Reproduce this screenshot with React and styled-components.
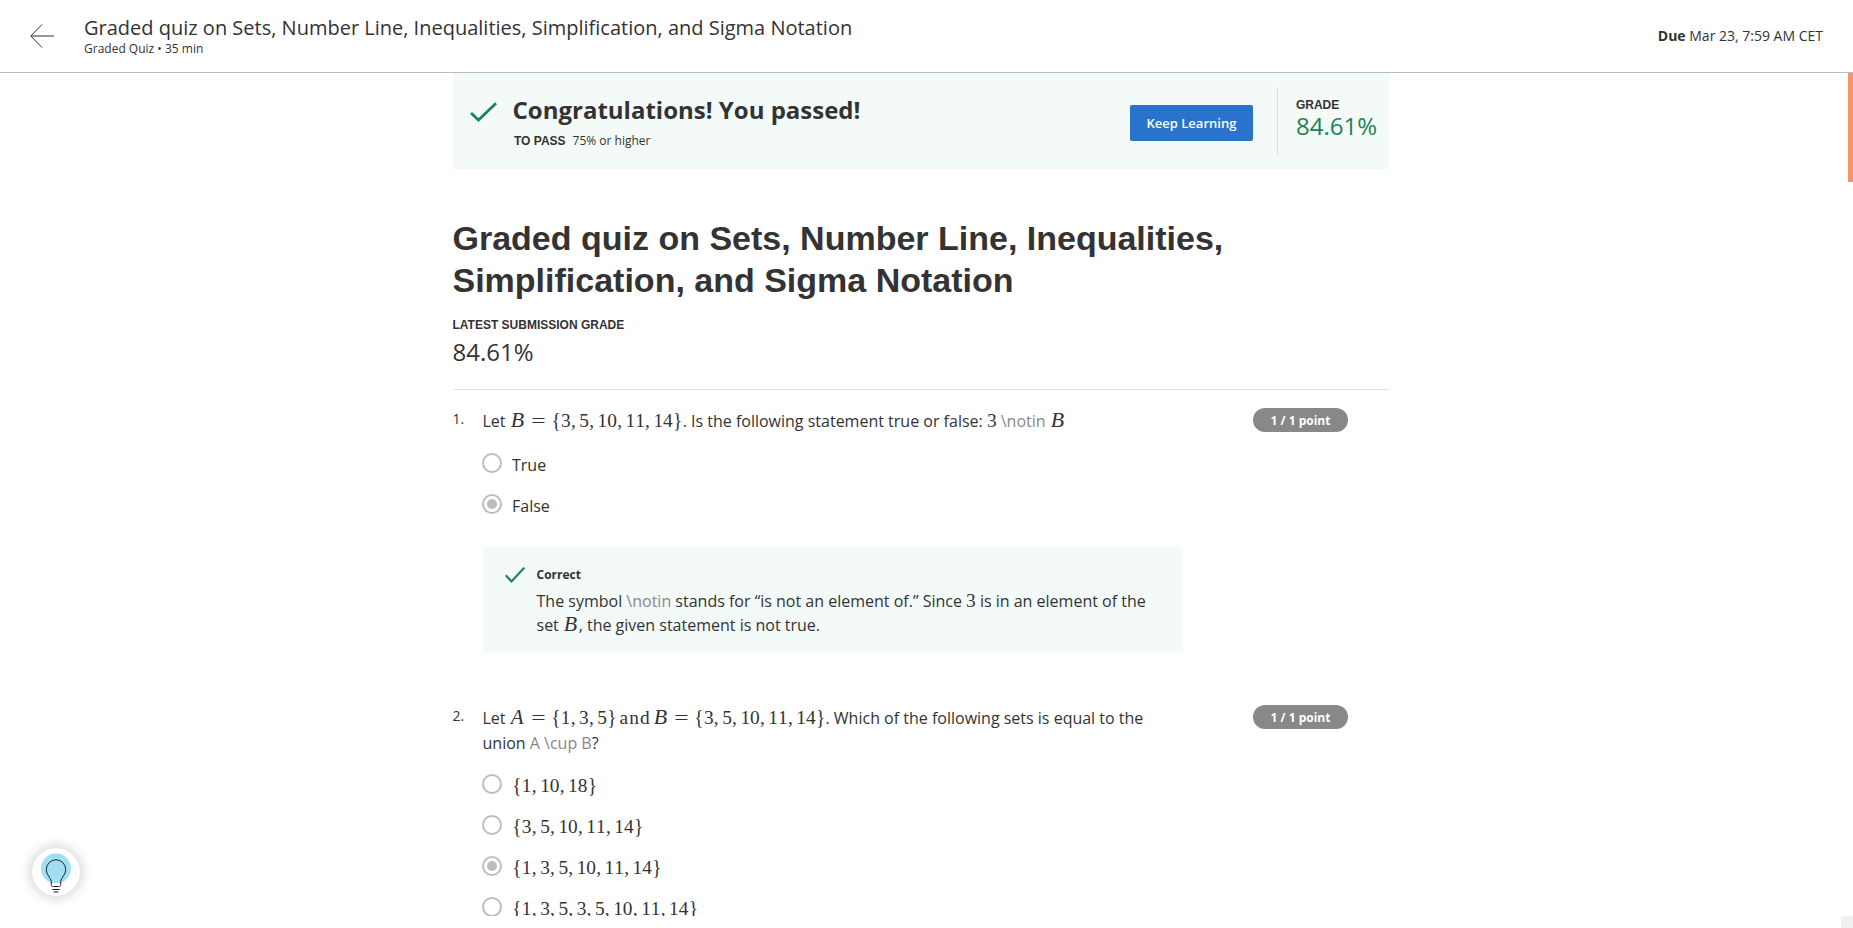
import React from "react";
import styled, { createGlobalStyle, css } from "styled-components";

const GlobalStyle = createGlobalStyle`
  *, *::before, *::after { box-sizing: border-box; }
  html, body { margin: 0; height: 100%; overflow: hidden; background: #fff; }
  body { font-family: "Open Sans", sans-serif; color: #333; }
`;

const Page = styled.div`
  height: 928px;
  width: 1853px;
  display: flex;
  flex-direction: column;
  position: relative;
`;

const Header = styled.header`
  height: 73px;
  flex: none;
  display: flex;
  align-items: center;
  padding: 0 30px;
  border-bottom: 1px solid #bbb;
`;

const HeaderText = styled.div`
  margin-left: 30px;
  flex: 1;
  height: 46px;
`;

const HeaderTitle = styled.div`
  font-size: 20px;
  line-height: 30px;
`;

const HeaderMeta = styled.div`
  font-size: 12px;
  line-height: 12px;
`;

const Due = styled.div`
  font-size: 14px;
  line-height: 20px;
`;

const Viewport = styled.div`
  height: 843px;
  flex: none;
  display: flex;
  overflow: hidden;
`;

const Content = styled.main`
  width: 936px;
  margin-left: 452.5px;
  flex: none;
`;

const ScrollThumb = styled.div`
  width: 5px;
  height: 109px;
  margin-left: auto;
  background: #f5936b;
`;

const Corner = styled.div`
  width: 12px;
  height: 12px;
  margin-left: auto;
  background: #f1f0f0;
`;

const Banner = styled.section`
  height: 96px;
  display: flex;
  align-items: center;
  background: #f3faf8;
`;

const BannerText = styled.div`
  margin-left: 16px;
  flex: 1;
  height: 68px;
  padding-top: 6px;
`;

const BannerTitle = styled.div`
  font-size: 24px;
  font-weight: 700;
  line-height: 34px;
`;

const PassLine = styled.div`
  margin: 5px 0 0 1.5px;
  display: flex;
  gap: 7px;
  font-size: 12px;
  line-height: 18px;
`;

const Caps = styled.div`
  font-family: "Liberation Sans", sans-serif;
  font-size: 12px;
  font-weight: 700;
  line-height: 18px;
`;

const KeepButton = styled.button`
  width: 123px;
  height: 36px;
  margin-top: 4px;
  padding: 0;
  border: 0;
  border-radius: 2px;
  background: #2a73cc;
  color: #fff;
  font: 600 13px/36px "Open Sans", sans-serif;
  white-space: nowrap;
`;

const GradeBox = styled.div`
  height: 68px;
  margin-left: 24px;
  padding: 9px 11.5px 0 18px;
  border-left: 1px solid #ddd;
`;

const Grade = styled.div`
  font-size: 24px;
  line-height: 24px;
  color: ${(p) => (p.$passed ? "#1f8354" : "#333")};
`;

const Summary = styled.section`
  height: 221px;
  padding-top: 48px;
  border-bottom: 1px solid #e1e1e1;
`;

const QuizTitle = styled.h1`
  margin: 0 0 15px;
  font-family: "Liberation Sans", sans-serif;
  font-size: 34px;
  font-weight: 700;
  line-height: 42px;
`;

const LatestGrade = styled.div`
  display: flex;
  flex-direction: column;
  gap: 6px;
`;

const Question = styled.section`
  height: ${(p) => p.$height}px;
  display: flex;
  align-items: flex-start;
  padding-top: 18px;
`;

const Number = styled.div`
  width: 30px;
  padding-top: 1px;
  font-size: 14px;
  line-height: 20px;
`;

const QuestionBody = styled.div`
  width: 701px;
  flex: none;
`;

const Prompt = styled.div`
  padding-top: 1px;
  font-size: 16px;
  line-height: 25px;
  white-space: nowrap;
`;

const Options = styled.div`
  padding-top: ${(p) => p.$top}px;
`;

const Option = styled.div`
  height: 41px;
  display: flex;
  gap: 10px;
  margin-left: -0.5px;
`;

const Radio = styled.div`
  width: 20px;
  height: 20px;
  flex: none;
  display: flex;
  align-items: center;
  justify-content: center;
  border: 2px solid #bdbdbd;
  border-radius: 50%;
  ${(p) =>
    p.$checked &&
    css`
      &::after {
        content: "";
        width: 10px;
        height: 10px;
        border-radius: 50%;
        background: #bdbdbd;
      }
    `}
`;

const OptionLabel = styled.div`
  font-size: 16px;
  line-height: 24px;
`;

const Feedback = styled.div`
  width: 700px;
  height: 105px;
  margin: 12px 0 0 0.5px;
  padding: 20px 0 0 22px;
  display: flex;
  gap: 11.5px;
  background: #f3faf8;
`;

const FeedbackTitle = styled.div`
  font-size: 12px;
  font-weight: 700;
  line-height: 16px;
`;

const FeedbackText = styled.div`
  margin-top: 6px;
  font-size: 16px;
  line-height: 24px;
  white-space: nowrap;
`;

const Points = styled.div`
  width: 95px;
  height: 24px;
  margin: 0 0 0 69.5px;
  border-radius: 12px;
  background: #888;
  color: #fff;
  font-size: 12px;
  font-weight: 700;
  line-height: 25px;
  text-align: center;
`;

const Raw = styled.span`
  color: #888;
`;

const Formula = styled.span`
  display: inline-flex;
  align-items: baseline;
  font-family: "Liberation Serif", serif;
  font-size: 19.36px;
  line-height: 20px;
  height: 20px;
  vertical-align: baseline;
`;

const Glyph = styled.span`
  display: inline-block;
  width: ${(p) => p.$width}em;
  margin: 0 ${(p) => p.$after || 0}em 0 ${(p) => p.$before || 0}em;
  text-align: center;
  font-style: ${(p) => (p.$italic ? "italic" : "normal")};
  transform: scale(${(p) => p.$stretch || 1}, ${(p) => p.$rise || 1});
  transform-origin: 50% 78%;
`;

const Upright = styled.span`
  letter-spacing: 0.056em;
  margin: 0 0.09em 0 0.14em;
`;

const HelpButton = styled.button`
  position: absolute;
  left: 32px;
  top: 848px;
  width: 48px;
  height: 48px;
  padding: 0;
  border: 0;
  border-radius: 50%;
  background: #fff;
  box-shadow: 0 0 14px rgba(0, 0, 0, 0.24);
`;

function glyphProps(ch) {
  if (ch === "=") return { $width: 0.778, $before: 0.278, $after: 0.278, $stretch: 1.32 };
  if (ch === ",") return { $width: 0.278, $after: 0.1667 };
  if (ch === "A") return { $width: 0.75, $after: 0.05, $italic: true, $stretch: 1.08, $rise: 1.07 };
  if (ch === "B") return { $width: 0.77, $after: 0.04, $italic: true, $stretch: 1.13, $rise: 1.05 };
  if (ch === "{" || ch === "}") return { $width: 0.51, $rise: 1.08 };
  return { $width: 0.5, $rise: 1.02 };
}

function Tex({ children }) {
  return (
    <Formula>
      {children.split(/(and)/).map((part, i) =>
        part === "and" ? (
          <Upright key={i}>and</Upright>
        ) : (
          [...part].map((ch, j) => (
            <Glyph key={`${i}-${j}`} {...glyphProps(ch)}>
              {ch}
            </Glyph>
          ))
        )
      )}
    </Formula>
  );
}

function BackArrow() {
  return (
    <svg width="24" height="24" viewBox="0 0 24 24" fill="none" stroke="#333" strokeWidth="1">
      <path d="M12 0.5 0.8 12 12 23.5M0.8 12H24" />
    </svg>
  );
}

function Check({ width, height, ...rest }) {
  return (
    <svg width={width} height={height} viewBox="0 0 27 20" fill="none" stroke="#1f8354" strokeWidth="2.8" {...rest}>
      <path d="M1 11 8.5 18 26 1.2" />
    </svg>
  );
}

const BannerCheck = styled(Check)`
  margin: -18px 0 0 17px;
`;

function SmallCheck() {
  return (
    <svg width="20" height="17" viewBox="0 0 20 17" fill="none" stroke="#1f8354" strokeWidth="2.200">
      <path d="M0.800 8.300 6.500 14.500 19.300 0.700" />
    </svg>
  );
}

function Bulb() {
  return (
    <svg width="48" height="48" viewBox="0 0 48 48" fill="none">
      <circle cx="24" cy="20.5" r="15" fill="#9fdef5" />
      <path
        d="M19.300 36.500V33.500C18.500 28.500 14.300 27.500 14.300 21.500a9.700 9.700 0 0 1 19.400 0C33.700 27.500 29.500 28.500 28.700 33.500V36.500q0 2-2 2H21.300q-2 0-2-2z"
        stroke="#222"
      />
      <path d="M20 35.800h8v2h-8z" fill="#fff" />
      <path d="M20.300 41.500h7.400M21.500 44h5" stroke="#222" strokeWidth="1.100" />
    </svg>
  );
}

function Choice({ checked, children }) {
  return (
    <Option>
      <Radio $checked={checked} />
      <OptionLabel>{children}</OptionLabel>
    </Option>
  );
}

export default function App() {
  return (
    <Page>
      <GlobalStyle />
      <Header>
        <BackArrow />
        <HeaderText>
          <HeaderTitle>
            Graded quiz on Sets, Number Line, Inequalities, Simplification, and Sigma Notation
          </HeaderTitle>
          <HeaderMeta>Graded Quiz • 35 min</HeaderMeta>
        </HeaderText>
        <Due>
          <b>Due</b> Mar 23, 7:59 AM CET
        </Due>
      </Header>
      <Viewport>
        <Content>
          <Banner>
            <BannerCheck width="27" height="20" />
            <BannerText>
              <BannerTitle>Congratulations! You passed!</BannerTitle>
              <PassLine>
                <Caps>TO PASS</Caps>
                <span>75% or higher</span>
              </PassLine>
            </BannerText>
            <KeepButton>Keep Learning</KeepButton>
            <GradeBox>
              <Caps>GRADE</Caps>
              <Grade $passed>84.61%</Grade>
            </GradeBox>
          </Banner>
          <Summary>
            <QuizTitle>
              Graded quiz on Sets, Number Line, Inequalities, Simplification, and Sigma Notation
            </QuizTitle>
            <LatestGrade>
              <Caps>LATEST SUBMISSION GRADE</Caps>
              <Grade>84.61%</Grade>
            </LatestGrade>
          </Summary>
          <Question $height={297}>
            <Number>1.</Number>
            <QuestionBody>
              <Prompt>
                Let <Tex>{"B={3,5,10,11,14}"}</Tex>. Is the following statement true or false:{" "}
                <Tex>3</Tex> <Raw>\notin</Raw> <Tex>B</Tex>
              </Prompt>
              <Options $top={19}>
                <Choice>True</Choice>
                <Choice checked>False</Choice>
              </Options>
              <Feedback>
                <SmallCheck />
                <div>
                  <FeedbackTitle>Correct</FeedbackTitle>
                  <FeedbackText>
                    The symbol <Raw>\notin</Raw> stands for “is not an element of.” Since <Tex>3</Tex> is in an
                    element of the
                    <br />
                    set <Tex>B</Tex>, the given statement is not true.
                  </FeedbackText>
                </div>
              </Feedback>
            </QuestionBody>
            <Points>1 / 1 point</Points>
          </Question>
          <Question $height={400}>
            <Number>2.</Number>
            <QuestionBody>
              <Prompt>
                Let <Tex>{"A={1,3,5}andB={3,5,10,11,14}"}</Tex>. Which of the following sets is equal to the
                <br />
                union <Raw>A \cup B</Raw>?
              </Prompt>
              <Options $top={18}>
                <Choice><Tex>{"{1,10,18}"}</Tex></Choice>
                <Choice><Tex>{"{3,5,10,11,14}"}</Tex></Choice>
                <Choice checked><Tex>{"{1,3,5,10,11,14}"}</Tex></Choice>
                <Choice><Tex>{"{1,3,5,3,5,10,11,14}"}</Tex></Choice>
              </Options>
            </QuestionBody>
            <Points>1 / 1 point</Points>
          </Question>
        </Content>
        <ScrollThumb />
      </Viewport>
      <Corner />
      <HelpButton aria-label="Help">
        <Bulb />
      </HelpButton>
    </Page>
  );
}
